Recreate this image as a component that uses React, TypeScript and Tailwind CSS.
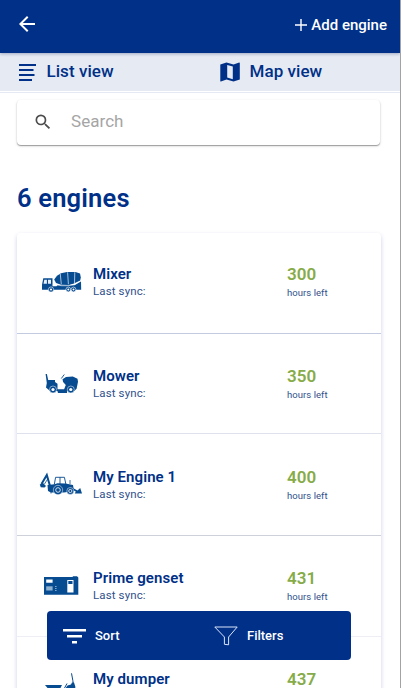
import React from 'react';
import { MdArrowBack, MdSearch } from 'react-icons/md';

const MixerIcon = () => (
  <svg viewBox="0 0 50 36" className="h-9 w-[50px]" fill="#074b90">
    <path d="M7.3 14.3h9.2v8h4l1-1h17l6.5-4 .2 8.5H6v-5z" />
    <path d="M8.3 15.8h2.6v4H7.5z M12 15.8h3v4h-3z" fill="#e6eef6" />
    <path d="M18.2 15.5l2.8-3.7 4-2.5 6-1.3h8.5l4.5 1.6.8 4-.6 2.8-6.2 3.2-5 1.5-8-.4-5-1.6z" />
    <path d="M24.3 10l1 10.2M31.6 8.3l.8 12M38.8 8.2l-.3 11.2" stroke="#fff" strokeWidth=".65" fill="none" />
    <path d="M19.5 20.2l5.5 1.5h8l6-1.5 6-3.2" stroke="#fff" strokeWidth=".6" fill="none" />
    <g stroke="#fff" strokeWidth=".6">
      <circle cx="15" cy="25.5" r="2.6" />
      <circle cx="32.3" cy="25.5" r="2.4" />
      <circle cx="37.5" cy="25.5" r="2.4" />
    </g>
    <g fill="#fff">
      <circle cx="15" cy="25.5" r="1.1" />
      <circle cx="32.3" cy="25.5" r="1" />
      <circle cx="37.5" cy="25.5" r="1" />
    </g>
  </svg>
);

const MowerIcon = () => (
  <svg viewBox="0 0 50 36" className="h-9 w-[50px]" fill="#074b90">
    <path d="M9.6 8h1.3l1.3 6h6.8v2l2.5 1.7v5.8h6.5l1.8-4.5-2.7-3-.6-2.7 3.5-2.4 6.8-.5 4.7 2.4.5 3-1.4 7-2.4 2.2H14l-4-3.5.8-4.5z" />
    <path d="M25.3 12.5l3-4" stroke="#074b90" strokeWidth=".9" />
    <g stroke="#fff" strokeWidth=".5">
      <circle cx="17" cy="23.5" r="3.5" />
      <circle cx="34.8" cy="23.5" r="3.5" />
    </g>
    <g fill="#fff">
      <circle cx="17" cy="23.5" r="1.6" />
      <circle cx="34.8" cy="23.5" r="1.6" />
    </g>
    <path d="M21 23.5h10V27h-9z" />
  </svg>
);

const BackhoeIcon = () => (
  <svg viewBox="0 0 50 36" className="h-9 w-[50px]" fill="#074b90">
    <path d="M5.5 17L10.8 8l3.2 11" stroke="#074b90" strokeWidth="2" fill="none" />
    <path d="M12 11.5L8.5 17" stroke="#074b90" strokeWidth=".8" />
    <path d="M3.8 17.5l3.2-1.5 3 3-1.5 1.5-3.8-.3z" />
    <path d="M11.5 18l7-.7 3-1 8 .2 7.5 1.5 1 6-10 1.5H15l-3-1.5z" />
    <path d="M18.3 17.5l1.3-7.2h8.8l1.6 7.5M24 10.3v7" stroke="#074b90" strokeWidth=".9" fill="none" />
    <path d="M34 17v-4M15 24v2.5" stroke="#074b90" strokeWidth=".8" />
    <path d="M36 20.5l5.5 3 2.7-2.5 1.8 5.6h-7.2l1-2-4.3-2z" />
    <g stroke="#fff" strokeWidth=".5">
      <circle cx="22" cy="23" r="4.7" />
      <circle cx="34.3" cy="24" r="3.5" />
    </g>
    <g fill="none" stroke="#fff" strokeWidth=".8">
      <circle cx="22" cy="23" r="2.3" />
      <circle cx="34.3" cy="24" r="1.6" />
    </g>
  </svg>
);

const GensetIcon = () => (
  <svg viewBox="0 0 50 36" className="h-9 w-[50px]" fill="#074b90">
    <path d="M8 9h28.5l.5-.8h4l1.3 1.3v17.2H8z" />
    <path d="M10.2 11.6h6.4v3.2h-6.4z M31.3 12h6.2v12.6h-6.2z" fill="#fff" />
    <path d="M32.3 13h4.2v3h-4.2z" />
    <path d="M10.2 18.3h6.4v4.2h-6.4z" fill="#8fb1d0" />
    <path d="M19 18.5h1.6M19 20.5h1.6M19 22.5h1.6" stroke="#8fb1d0" strokeWidth=".9" />
  </svg>
);

const DumperIcon = () => (
  <svg viewBox="0 0 50 36" className="h-9 w-[50px]" fill="#074b90">
    <path d="M9 16h17l-3 6H14z" />
    <path d="M31 14.5L28 20M35.5 4.3l1.3 7 .5 4" stroke="#074b90" strokeWidth="1" fill="none" />
    <path d="M31.5 16.5l3.5-1 1-2h2l1.3 4v5H28l2-4z" />
  </svg>
);

const ListIcon = () => (
  <svg viewBox="0 0 18 17" className="h-[17px] w-[18px]" fill="#003087">
    <path d="M1 0h17v2.1H1zM1 5h14.5v2.1H1zM1 10h15.5v2.1H1zM1 15h13v2.1H1z" />
  </svg>
);

const MapIcon = () => (
  <svg viewBox="0 0 20 20" className="size-5" fill="#003087" fillRule="evenodd">
    <path d="M.3 2.6L6.5.5l7 2L19.2.5q.6 0 .6.6v16.3l-6.3 2.1-7-2-5.6 2.1q-.6 0-.6-.6z M7.2 3v12.6l5.6 1.6V4.6z" />
  </svg>
);

const SortIcon = () => (
  <svg viewBox="0 0 24 16" className="h-4 w-6" fill="#fff">
    <path d="M1 1h23v2.4H1zM5 7h15v2.4H5zM10 13h5v2.4h-5z" />
  </svg>
);

const FunnelIcon = () => (
  <svg viewBox="0 0 24 20" className="h-5 w-6" fill="none" stroke="#dbe6fb" strokeWidth="1">
    <path d="M.8 1h22.4l-8.6 10v7.8l-4.2-.5V11z" />
  </svg>
);

const engines = [
  { name: 'Mixer', hours: 300, icon: <MixerIcon />, row: 'h-[101px] pt-[31px] border-[#c3cbe0]' },
  { name: 'Mower', hours: 350, icon: <MowerIcon />, row: 'h-[100px] pt-8 border-[#dfe2ec]' },
  { name: 'My Engine 1', hours: 400, icon: <BackhoeIcon />, row: 'h-[102px] pt-[33px] border-[#ced1da]' },
  { name: 'Prime genset', hours: 431, icon: <GensetIcon />, row: 'h-[101px] pt-8 border-[#eeeff5]' },
  { name: 'My dumper', hours: 437, icon: <DumperIcon />, row: 'h-[101px] pt-8 border-[#ced1da]' },
];

const App: React.FC = () => {
  return (
    <div className="relative flex h-[688px] w-[401px] flex-col overflow-hidden border-r border-[#a3a3a3] bg-white font-['Roboto',sans-serif] text-[#003087]">
      <header className="z-10 flex h-[53px] shrink-0 items-center justify-between bg-[#003087] pr-[13px] pb-[3px] pl-[15px] text-white shadow-[0_1px_3px_rgba(0,20,80,0.3)]">
        <MdArrowBack className="mb-[2px] size-6" />
        <button className="flex items-center gap-1 text-[15px] font-medium">
          <svg viewBox="0 0 12 12" className="mb-px size-3" stroke="#fff" strokeWidth="1.4">
            <path d="M6 0v12M0 6h12" />
          </svg>
          Add engine
        </button>
      </header>

      <nav className="flex h-[38px] shrink-0 bg-[#e5eaf3] pl-[18px] text-[17px] font-medium">
        <div className="flex w-[202px] items-center gap-[10.5px]">
          <ListIcon />
          <span className="tracking-[0.05px]">List view</span>
        </div>
        <div className="flex items-center gap-[9.5px]">
          <MapIcon />
          <span className="tracking-[0.05px]">Map view</span>
        </div>
      </nav>
      <div className="h-px shrink-0" />
      <div className="h-px shrink-0 bg-[#e4e9f3]" />

      <main className="flex flex-col px-[17px] pt-[7px]">
        <div className="flex h-[45px] w-[363px] items-center gap-[18px] rounded-sm bg-white pb-[2px] pl-4 shadow-[0_1px_1px_rgba(0,0,0,0.32),0_1px_3px_rgba(0,0,0,0.15)]">
          <MdSearch className="size-5 text-[#4c4c4c]" />
          <span className="text-[17px] tracking-[0.05px] text-[#a5a5a5]">Search</span>
        </div>

        <h1 className="mt-[37px] mb-[19px] h-8 text-[25.5px] leading-8 font-semibold tracking-[0.18px]">6 engines</h1>

        <section className="w-[364px] rounded bg-white shadow-[0_2px_4px_rgba(80,80,190,0.28)]">
          {engines.map((engine) => (
            <div key={engine.name} className={`flex border-b pl-[19px] ${engine.row}`}>
              {engine.icon}
              <div className="ml-[7px] w-[194px]">
                <div className="text-[15px] leading-5 font-semibold tracking-[0.08px]">{engine.name}</div>
                <div className="text-[11.5px] leading-[15px] tracking-[0.12px] text-[#31518c]">Last sync:</div>
              </div>
              <div>
                <div className="text-[17px] leading-5 font-semibold text-[#86ab48]">{engine.hours}</div>
                <div className="text-[9.5px] leading-[18px] tracking-[0.05px] text-[#31518c]">hours left</div>
              </div>
            </div>
          ))}
        </section>
      </main>

      {/* Floating toolbar */}
      <div className="absolute top-[611px] left-[47px] flex h-[49px] w-[304px] items-center rounded bg-[#003087] pl-[15px] text-[13px] font-medium text-white">
        <button className="flex w-[152px] items-center gap-[9px]">
          <SortIcon />
          Sort
        </button>
        <button className="flex items-center gap-[9px]">
          <FunnelIcon />
          Filters
        </button>
      </div>
    </div>
  );
};

export default App;
